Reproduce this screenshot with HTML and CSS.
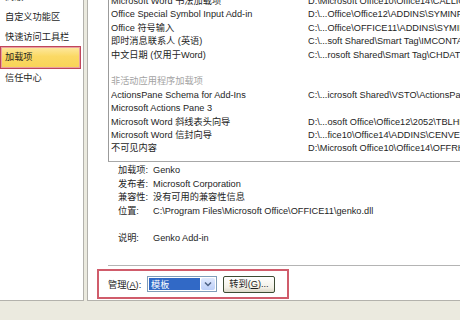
FILE: index.html
```html
<!DOCTYPE html>
<html>
<head>
<meta charset="utf-8">
<title>加载项</title>
<link rel="stylesheet" href="styles.css">
</head>
<body>
<div class="dialog">
  <div class="nav">
    <ul class="nav-list">
      <li>高级</li>
      <li>自定义功能区</li>
      <li>快速访问工具栏</li>
      <li class="active">加载项</li>
      <li>信任中心</li>
    </ul>
  </div>

  <div class="main">
    <div class="addins">
      <div class="addins-rows">
        <div class="row"><span>Microsoft Word 书法加载项</span><span>D:\Microsoft Office10\Office14\CALLIGRA.DLL</span></div>
        <div class="row"><span>Office Special Symbol Input Add-in</span><span>D:\...Office\Office12\ADDINS\SYMINPUT.DLL</span></div>
        <div class="row"><span>Office 符号输入</span><span>C:\...Office\OFFICE11\ADDINS\SYMINPUT.DLL</span></div>
        <div class="row"><span>即时消息联系人 (英语)</span><span>C:\...soft Shared\Smart Tag\IMCONTACT.DLL</span></div>
        <div class="row"><span>中文日期 (仅用于Word)</span><span>C:\...rosoft Shared\Smart Tag\CHDATE.DLL</span></div>
        <div class="row"><span>&nbsp;</span><span></span></div>
        <div class="row group"><span>非活动应用程序加载项</span><span></span></div>
        <div class="row"><span>ActionsPane Schema for Add-Ins</span><span>C:\...icrosoft Shared\VSTO\ActionsPane3.xsd</span></div>
        <div class="row"><span>Microsoft Actions Pane 3</span><span></span></div>
        <div class="row"><span>Microsoft Word 斜线表头向导</span><span>D:\...osoft Office\Office12\2052\TBLHEAD.DLL</span></div>
        <div class="row"><span>Microsoft Word 信封向导</span><span>D:\...fice10\Office14\ADDINS\CENVELOP.DLL</span></div>
        <div class="row"><span>不可见内容</span><span>D:\Microsoft Office10\Office14\OFFRHD.DLL</span></div>
      </div>
    </div>

    <div class="details">
      <span>加载项:</span><span>Genko</span>
      <span>发布者:</span><span>Microsoft Corporation</span>
      <span>兼容性:</span><span>没有可用的兼容性信息</span>
      <span>位置:</span><span>C:\Program Files\Microsoft Office\OFFICE11\genko.dll</span>
      <span>&nbsp;</span><span></span>
      <span>说明:</span><span>Genko Add-in</span>
    </div>

    <div class="sep"></div>

    <div class="manage">
      <span class="manage-label">管理(<u>A</u>):</span>
      <div class="combo">
        <span class="combo-value">模板</span>
        <span class="combo-btn">
          <svg width="8" height="6" viewBox="0 0 8 6"><path d="M1 1.5 L4 4.5 L7 1.5" fill="none" stroke="#4d6185" stroke-width="1.5"/></svg>
        </span>
      </div>
      <span class="go-btn">转到(<u>G</u>)...</span>
    </div>
  </div>

  <div class="footer"></div>
</div>
</body>
</html>
```

FILE: styles.css
```css
body {
  margin: 0;
  width: 460px;
  height: 320px;
  overflow: hidden;
  font-family: "Liberation Sans", "Noto Sans CJK SC", sans-serif;
  font-size: 9.2px;
  color: #1e1e1e;
}

.dialog {
  display: grid;
  grid-template-columns: 84px 1fr;
  grid-template-rows: 301px 19px;
  column-gap: 3px;
  width: 460px;
  height: 320px;
  background-color: #ebeadf;
}

/* left navigation */
.nav {
  background-color: #ffffff;
  border-right: 1px solid #b3b2ac;
  border-bottom: 1px solid #b3b2ac;
  overflow: hidden;
}

.nav-list {
  list-style: none;
  margin: -13px 0 0 0;
  padding: 0;
}

.nav-list li {
  height: 20px;
  line-height: 20px;
  padding-left: 5px;
  white-space: nowrap;
}

.nav-list li.active {
  height: 21px;
  line-height: 21px;
  margin: -1px 2px -1px 0;
  padding-left: 4px;
  border: 1px solid #c0465a;
  box-shadow: inset 0 0 0 1px #e9a0a0;
  background: linear-gradient(#fde9a2, #fbd964 45%, #f8d357);
}

/* main panel */
.main {
  background-color: #ffffff;
  border-left: 1px solid #b3b2ac;
  border-bottom: 1px solid #b3b2ac;
  overflow: hidden;
}

.addins {
  margin-left: 20px;
  height: 161px;
  border-left: 1px solid #9b9b9b;
  border-bottom: 1px solid #a8a8a8;
  overflow: hidden;
}

.addins-rows {
  margin-top: -5px;
  padding-left: 2px;
}

.row {
  display: grid;
  grid-template-columns: 197px 1fr;
  line-height: 13.4px;
  height: 13.4px;
  white-space: nowrap;
  overflow: hidden;
}

.row span {
  overflow: hidden;
}

.row.group {
  color: #a3a3a3;
}

.details {
  display: grid;
  grid-template-columns: 35px 1fr;
  margin: 2px 0 0 30px;
  line-height: 13.5px;
  white-space: nowrap;
}

.sep {
  margin: 20px 0 0 20px;
  height: 0;
  border-top: 1px solid #b4b4b4;
}

/* manage box */
.manage {
  display: flex;
  align-items: center;
  box-sizing: border-box;
  width: 192px;
  height: 30px;
  margin: 3px 0 0 9px;
  padding-left: 9px;
  border: 2px solid #d05c6b;
}

.manage-label {
  width: 39px;
  white-space: nowrap;
}

.combo {
  display: flex;
  box-sizing: border-box;
  width: 70px;
  height: 16px;
  padding: 1px;
  border: 1px solid #7f9db9;
  background-color: #ffffff;
}

.combo-value {
  flex: 1;
  line-height: 14px;
  padding-left: 2px;
  color: #ffffff;
  background-color: #3169c6;
}

.combo-btn {
  display: flex;
  align-items: center;
  justify-content: center;
  width: 14px;
  margin-left: 1px;
  border-radius: 2px;
  background: linear-gradient(#dfe8fd, #bccff8);
}

.go-btn {
  box-sizing: border-box;
  width: 52px;
  height: 17px;
  line-height: 15px;
  margin-left: 6px;
  text-align: center;
  border: 1px solid #3d4b33;
  border-radius: 2px;
  background: linear-gradient(#ffffff, #f2f0e6 70%, #dcd8c8);
  white-space: nowrap;
}

.footer {
  grid-column: 1 / 3;
}
```
